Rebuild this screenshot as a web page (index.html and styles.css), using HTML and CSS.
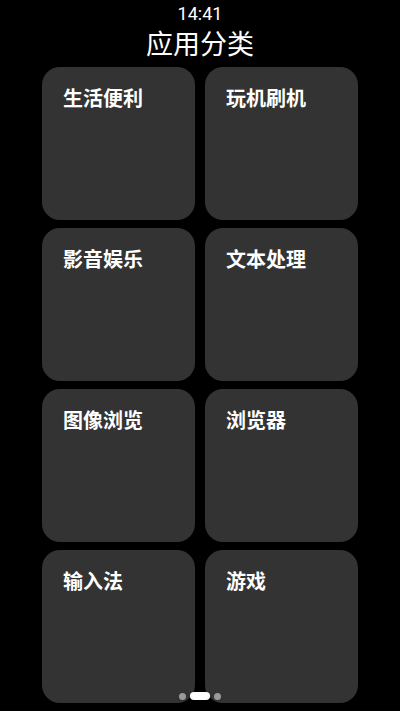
FILE: index.html
```html
<!DOCTYPE html>
<html lang="zh-CN">
<head>
<meta charset="utf-8">
<link rel="stylesheet" href="styles.css">
</head>
<body>
<div class="screen">
  <header class="top">
    <div class="time">14:41</div>
    <h1 class="title">应用分类</h1>
  </header>
  <main class="grid">
    <div class="card"><span class="label">生活便利</span></div>
    <div class="card"><span class="label">玩机刷机</span></div>
    <div class="card"><span class="label">影音娱乐</span></div>
    <div class="card"><span class="label">文本处理</span></div>
    <div class="card"><span class="label">图像浏览</span></div>
    <div class="card"><span class="label">浏览器</span></div>
    <div class="card"><span class="label">输入法</span></div>
    <div class="card"><span class="label">游戏</span></div>
  </main>
  <div class="dots">
    <span class="dot"></span>
    <span class="dot active"></span>
    <span class="dot"></span>
  </div>
</div>
</body>
</html>
```
FILE: styles.css
```css
html, body {
  margin: 0;
  padding: 0;
  background: #000;
}
body {
  font-family: "Noto Sans CJK SC", "Noto Sans", sans-serif;
  color: #fff;
}
.screen {
  position: relative;
  width: 400px;
  height: 711px;
  overflow: hidden;
  background: #000;
}
.top {
  display: flex;
  flex-direction: column;
  align-items: center;
  padding-top: 4px;
}
.time {
  font-family: "Roboto", "Noto Sans", sans-serif;
  font-size: 18px;
  line-height: 20px;
  color: #fff;
}
.title {
  margin: 0;
  font-size: 27px;
  font-weight: 400;
  line-height: 38px;
}
.grid {
  display: grid;
  grid-template-columns: 153px 153px;
  grid-auto-rows: 153px;
  column-gap: 10px;
  row-gap: 8px;
  padding-left: 42px;
  margin-top: 5px;
}
.card {
  background: #333333;
  border-radius: 18px;
  padding: 17px 21px;
  box-sizing: border-box;
}
.label {
  font-size: 20px;
  font-weight: 700;
  line-height: 28px;
  color: #fff;
}
.dots {
  position: absolute;
  left: 0;
  right: 0;
  top: 692px;
  display: flex;
  justify-content: center;
  align-items: center;
  gap: 4px;
}
.dot {
  width: 7px;
  height: 7px;
  border-radius: 50%;
  background: #9a9a9a;
}
.dot.active {
  width: 20px;
  height: 8px;
  border-radius: 4px;
  background: #fff;
}
```
